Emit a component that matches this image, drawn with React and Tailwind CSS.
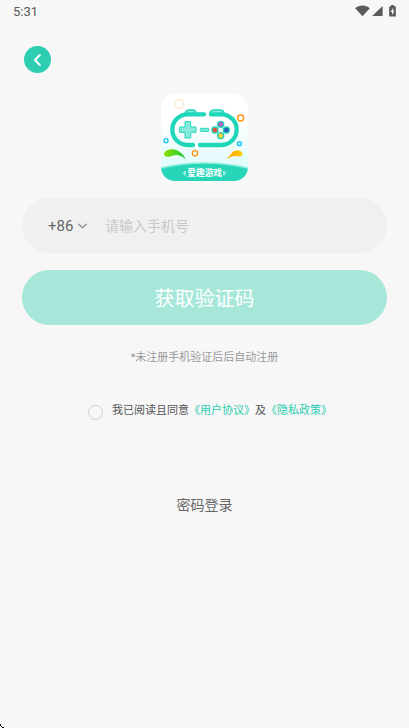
import React from "react";

function StatusBar() {
  return (
    <header className="flex h-6 items-start justify-between pl-[13px] pr-[13px] text-[#5a5a5a]">
      <span className="text-[13px] leading-6">5:31</span>
      <div className="flex items-center gap-[2px] pt-[5px]">
        <svg className="h-3 w-[15px]" viewBox="0 0 15 12" fill="currentColor" aria-hidden="true">
          <path d="M0.2 3.2C2.2 1.3 4.7 0.4 7.5 0.4s5.3 0.9 7.3 2.8L7.5 11.2Z" />
        </svg>
        <svg className="h-3 w-[11px]" viewBox="0 0 11 12" fill="currentColor" aria-hidden="true">
          <path d="M10.6 0.9V11H0.2Z" />
        </svg>
        <svg className="ml-1 h-3 w-[7px]" viewBox="0 0 7 12" aria-hidden="true">
          <path fill="currentColor" d="M2.1 0h2.8v1.2h1.2q.7 0 .7.7v9q0 .7-.7.7H.9q-.7 0-.7-.7V1.9q0-.7.7-.7h1.2Z" />
          <path fill="#f7f7f7" d="M4.2 2.7 1.5 6.9h1.5v3L5.5 5.7H4.2Z" />
        </svg>
      </div>
    </header>
  );
}

function AppLogo() {
  return (
    <svg className="size-[87px] rounded-[14px]" viewBox="18 17 261 261" role="img" aria-label="爱趣游戏">
      <defs>
        <linearGradient id="card" x1="0" y1="0" x2="0" y2="1">
          <stop offset="0.3" stopColor="#ffffff" />
          <stop offset="0.8" stopColor="#e2fbfb" />
        </linearGradient>
        <linearGradient id="leaf" x1="0" y1="0" x2="1" y2="0">
          <stop offset="0" stopColor="#8be000" />
          <stop offset="1" stopColor="#19c93b" />
        </linearGradient>
        <linearGradient id="flame" x1="0" y1="0" x2="1" y2="0">
          <stop offset="0" stopColor="#ff9a00" />
          <stop offset="1" stopColor="#ffcf00" />
        </linearGradient>
      </defs>
      <rect x="18" y="17" width="261" height="261" fill="url(#card)" />
      <path d="M18 239Q148 209 279 239V278H18Z" fill="#27d6b8" />
      <path d="M18 239Q148 209 279 239" fill="none" stroke="#8ceedd" strokeWidth="4" />

      <circle cx="73" cy="47" r="13" fill="none" stroke="#ffe3c8" strokeWidth="4" />
      <circle cx="257" cy="89" r="9" fill="none" stroke="#ff930a" strokeWidth="4" />
      <circle cx="120" cy="195" r="8" fill="none" stroke="#ff930a" strokeWidth="4" />
      <circle cx="33" cy="157" r="6" fill="#fff" stroke="#14c6f5" strokeWidth="4" />
      <circle cx="253" cy="166" r="6" fill="#b9f2ff" stroke="#14c6f5" strokeWidth="4" />
      <path d="M27 195C34 181 56 180 70 188C83 196 88 204 93 213C80 203 66 197 53 202C40 208 25 206 27 195Z" fill="url(#leaf)" />
      <path d="M262 194C256 183 240 184 231 193C225 202 220 207 212 211C225 209 233 202 242 203C253 206 265 203 262 194Z" fill="url(#flame)" />

      <path d="M90 74Q94 65 102 65H114Q121 65 124 74M164 74Q168 65 176 65H196Q204 65 208 74" fill="#83ead8" stroke="#1fd6b7" strokeWidth="4" />
      <g fill="none" stroke="#20d6b8" strokeWidth="13" strokeLinecap="round">
        <path d="M147 78H98A46 46 0 0 0 98 170H114" />
        <path d="M168 78H199A46 46 0 0 1 199 170H135" />
      </g>
      <path d="M90 100H107V116H123V132H107V149H90V132H74V116H90Z" fill="#87eadb" stroke="#20d6b8" strokeWidth="3" />
      <rect x="136" y="120" width="25" height="9" rx="2" fill="#87eadb" stroke="#20d6b8" strokeWidth="3" />
      <g strokeWidth="4" stroke="#20cdb5">
        <circle cx="197" cy="108" r="9" fill="#bd5bc5" />
        <circle cx="180" cy="125" r="9" fill="#f04c43" />
        <circle cx="214" cy="125" r="9" fill="#265eb8" />
        <circle cx="197" cy="142" r="9" fill="#ffd23b" />
      </g>
      <g fill="#fff">
        <rect x="88" y="248" width="4" height="13" opacity="0.8" />
        <rect x="83" y="251" width="3" height="7" opacity="0.5" />
        <rect x="205" y="248" width="4" height="13" opacity="0.8" />
        <rect x="211" y="251" width="3" height="7" opacity="0.5" />
        <text x="149" y="263" textAnchor="middle" className="text-[26px] font-bold">爱趣游戏</text>
      </g>
    </svg>
  );
}

export default function App() {
  return (
    <div className="relative flex min-h-screen flex-col bg-[#f7f7f7] font-[Roboto,'Noto_Sans_CJK_SC',sans-serif]" lang="zh-CN">
      <StatusBar />

      <nav className="px-6 pt-[22px]">
        <button type="button" aria-label="返回" className="flex size-[27px] items-center justify-center rounded-full bg-[#2dcdb2] text-white">
          <svg className="h-3 w-2" viewBox="0 0 8 12" fill="none" stroke="currentColor" strokeWidth="2" strokeLinecap="round" strokeLinejoin="round" aria-hidden="true">
            <path d="M5.8 1 0.9 6l4.9 5" />
          </svg>
        </button>
      </nav>

      <main className="flex flex-col items-center px-[22px] pt-[21px]">
        <AppLogo />

        <form className="mt-[17px] flex w-full flex-col items-center" onSubmit={(e) => e.preventDefault()}>
          <div className="flex h-[55px] w-full items-center rounded-full bg-[#f0f0f0] px-[26px] pt-[2px]">
            <label className="flex items-center gap-1 text-[#666]">
              <select aria-label="国家区号" defaultValue="86" className="w-[26px] appearance-none bg-transparent text-[15px] outline-none">
                <option value="86">+86</option>
              </select>
              <svg className="h-2 w-[9px]" viewBox="0 0 9 8" fill="none" stroke="#999" strokeWidth="1.6" strokeLinecap="round" strokeLinejoin="round" aria-hidden="true">
                <path d="M1 1.4 4.5 4.8 8 1.4" />
              </svg>
            </label>
            <input
              type="tel"
              aria-label="手机号"
              placeholder="请输入手机号"
              className="ml-[18px] min-w-0 flex-1 bg-transparent text-[14px] text-[#555] outline-none placeholder:text-[#c8c8c8]"
            />
          </div>

          <button type="submit" className="mt-[17px] h-[55px] w-full rounded-full bg-[#a6e7da] pt-[2px] text-[20px] text-white">
            获取验证码
          </button>

          <p className="mt-[25px] text-[11px] leading-4 text-[#999]">*未注册手机验证后后自动注册</p>

          <div className="mt-[37px] flex items-start gap-[9px] pl-[11px]">
            <input
              id="agree"
              type="checkbox"
              className="mt-[2px] size-[15px] appearance-none rounded-full border border-[#d0d0d0] checked:bg-[#2dcdb2]"
            />
            <p className="text-[11px] leading-4 whitespace-nowrap text-[#555]">
              <label htmlFor="agree">我已阅读且同意</label>
              <a href="#terms" className="text-[#2dcdb2]">《用户协议》</a>
              及
              <a href="#privacy" className="text-[#2dcdb2]">《隐私政策》</a>
            </p>
          </div>
        </form>

        <button type="button" className="mt-[73px] text-[14px] leading-6 text-[#666]">
          密码登录
        </button>
      </main>

      <svg className="absolute bottom-0 left-0 size-1" viewBox="0 0 4 4" fill="#111" aria-hidden="true">
        <path d="M0 0h1v2H0ZM1 2h1v1H1ZM2 3h2v1H2Z" />
      </svg>
    </div>
  );
}
